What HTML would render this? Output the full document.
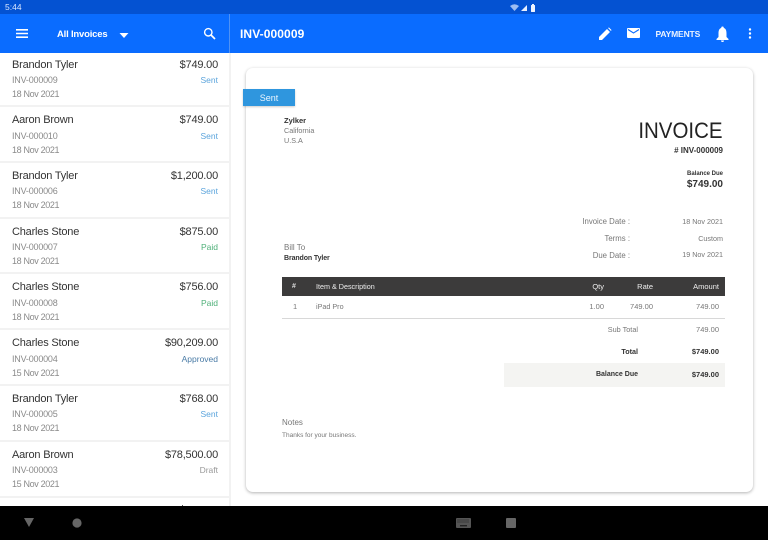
<!DOCTYPE html>
<html>
<head>
<meta charset="utf-8">
<style>
html,body{margin:0;padding:0;}
body{width:768px;height:540px;overflow:hidden;background:#fff;position:relative;font-family:"Liberation Sans",sans-serif;color:#333;}
.a{position:absolute;white-space:nowrap;line-height:1;}
.r{text-align:right;}
.sb{position:absolute;left:0;top:0;width:768px;height:14px;background:#0452d2;}
.tb{position:absolute;left:0;top:14px;width:768px;height:39px;background:#0a6cff;}
.ln{position:absolute;left:0;width:229px;height:2px;background:#f2f2f2;}
.nm{position:absolute;left:12px;font-size:11px;line-height:14px;color:#333;white-space:nowrap;letter-spacing:-.2px;}
.am{position:absolute;right:550px;font-size:11px;line-height:14px;color:#333;white-space:nowrap;letter-spacing:-.2px;}
.id{position:absolute;left:12px;font-size:9px;line-height:11px;color:#8a8a8a;white-space:nowrap;letter-spacing:-.2px;}
.st{position:absolute;right:550px;font-size:8.5px;line-height:11px;white-space:nowrap;}
.dt{position:absolute;left:12px;font-size:9px;line-height:11px;color:#8a8a8a;white-space:nowrap;letter-spacing:-.35px;}
.g{color:#777;}
.b{font-weight:bold;color:#333;}
</style>
</head>
<body>
<div class="sb"></div>
<div class="tb"></div>
<div class="a" style="left:5px;top:3px;font-size:8.5px;color:#dbe7ff;">5:44</div>
<svg class="a" style="left:509px;top:3px" width="30" height="9" viewBox="0 0 30 9">
<path d="M1 3 Q5.5 -0.5 10 3 L5.5 8Z" fill="#9dbdf2"/><path d="M12 8 L18 2 V8Z" fill="#e8efff"/><rect x="22" y="2" width="4" height="7" rx=".5" fill="#eef3ff"/><rect x="23" y="1" width="2" height="1" fill="#eef3ff"/>
</svg>
<div style="position:absolute;left:229px;top:14px;width:1px;height:39px;background:#4f92f5;"></div>
<svg class="a" style="left:16px;top:29px" width="12" height="9" viewBox="0 0 12 9"><path d="M0 0h12v1.6H0zM0 3.7h12v1.6H0zM0 7.4h12V9H0z" fill="#fff"/></svg>
<div class="a" style="left:57px;top:30px;font-size:9.5px;font-weight:bold;color:#fff;letter-spacing:-.2px;">All Invoices</div>
<svg class="a" style="left:119px;top:33px" width="10" height="5" viewBox="0 0 10 5"><path d="M0.5 0H9.5L5 5Z" fill="#fff"/></svg>
<svg class="a" style="left:203px;top:27px" width="13" height="13" viewBox="0 0 13 13"><circle cx="5.3" cy="5.3" r="3.7" fill="none" stroke="#fff" stroke-width="1.4"/><path d="M8 8L12 12" stroke="#fff" stroke-width="1.7"/></svg>
<div class="a" style="left:240px;top:28px;font-size:12px;font-weight:bold;color:#fff;letter-spacing:.1px;">INV-000009</div>
<svg class="a" style="left:598px;top:27px" width="14" height="14" viewBox="0 0 14 14"><path d="M1 13V10L9 2L12 5L4 13Z M10 1L11 .5L13.5 3L13 4Z" fill="#fff"/></svg>
<svg class="a" style="left:627px;top:28px" width="13" height="10" viewBox="0 0 13 10"><rect width="13" height="10" rx="1" fill="#fff"/><path d="M1 1.5L6.5 5L12 1.5" fill="none" stroke="#0a6cff" stroke-width="1.1"/></svg>
<div class="a" style="left:655.5px;top:30px;font-size:8.5px;font-weight:bold;color:#eaf2ff;letter-spacing:-.15px;">PAYMENTS</div>
<svg class="a" style="left:716px;top:26px" width="13" height="16" viewBox="0 0 13 16"><path d="M6.5 0.5a1.2 1.2 0 0 1 1.2 1.4C10 2.6 10.5 5 10.5 7.5V11L12.5 13V14H.5V13L2.5 11V7.5C2.5 5 3 2.6 5.3 1.9A1.2 1.2 0 0 1 6.5 .5ZM5 14.5H8A1.5 1.5 0 0 1 5 14.5Z" fill="#fff"/></svg>
<svg class="a" style="left:748px;top:28px" width="4" height="11" viewBox="0 0 4 11"><circle cx="2" cy="1.5" r="1.2" fill="#fff"/><circle cx="2" cy="5.5" r="1.2" fill="#fff"/><circle cx="2" cy="9.5" r="1.2" fill="#fff"/></svg>

<!-- list -->
<div style="position:absolute;left:229px;top:53px;width:2px;height:453px;background:#f2f2f2;"></div>

<div class="nm" style="top:58px">Brandon Tyler</div><div class="am" style="top:58px">$749.00</div>
<div class="id" style="top:75px">INV-000009</div><div class="st" style="top:75px;color:#5ba4dc">Sent</div>
<div class="dt" style="top:89px">18 Nov 2021</div><div class="ln" style="top:105px"></div>

<div class="nm" style="top:113px">Aaron Brown</div><div class="am" style="top:113px">$749.00</div>
<div class="id" style="top:131px">INV-000010</div><div class="st" style="top:131px;color:#5ba4dc">Sent</div>
<div class="dt" style="top:145px">18 Nov 2021</div><div class="ln" style="top:161px"></div>

<div class="nm" style="top:169px">Brandon Tyler</div><div class="am" style="top:169px">$1,200.00</div>
<div class="id" style="top:186px">INV-000006</div><div class="st" style="top:186px;color:#5ba4dc">Sent</div>
<div class="dt" style="top:200px">18 Nov 2021</div><div class="ln" style="top:217px"></div>

<div class="nm" style="top:225px">Charles Stone</div><div class="am" style="top:225px">$875.00</div>
<div class="id" style="top:242px">INV-000007</div><div class="st" style="top:242px;color:#4fb079">Paid</div>
<div class="dt" style="top:256px">18 Nov 2021</div><div class="ln" style="top:272px"></div>

<div class="nm" style="top:280px">Charles Stone</div><div class="am" style="top:280px">$756.00</div>
<div class="id" style="top:298px">INV-000008</div><div class="st" style="top:298px;color:#4fb079">Paid</div>
<div class="dt" style="top:312px">18 Nov 2021</div><div class="ln" style="top:328px"></div>

<div class="nm" style="top:336px">Charles Stone</div><div class="am" style="top:336px">$90,209.00</div>
<div class="id" style="top:354px">INV-000004</div><div class="st" style="top:354px;color:#4a7ba6">Approved</div>
<div class="dt" style="top:368px">15 Nov 2021</div><div class="ln" style="top:384px"></div>

<div class="nm" style="top:392px">Brandon Tyler</div><div class="am" style="top:392px">$768.00</div>
<div class="id" style="top:409px">INV-000005</div><div class="st" style="top:409px;color:#5ba4dc">Sent</div>
<div class="dt" style="top:423px">18 Nov 2021</div><div class="ln" style="top:440px"></div>

<div class="nm" style="top:448px">Aaron Brown</div><div class="am" style="top:448px">$78,500.00</div>
<div class="id" style="top:465px">INV-000003</div><div class="st" style="top:465px;color:#999">Draft</div>
<div class="dt" style="top:479px">15 Nov 2021</div><div class="ln" style="top:496px"></div>

<!-- invoice card -->
<div style="position:absolute;left:246px;top:68px;width:507px;height:424px;background:#fff;border-radius:7px;box-shadow:0 1px 3px rgba(0,0,0,.3);"></div>
<div class="a" style="left:243px;top:89px;width:52px;height:17px;background:#2f96de;color:#eaf5ff;font-size:9px;line-height:18px;text-align:center;box-shadow:0 1px 2px rgba(0,0,0,.2);">Sent</div>

<div class="a b" style="left:284px;top:117px;font-size:7.5px;">Zylker</div>
<div class="a g" style="left:284px;top:127px;font-size:7.2px;">California</div>
<div class="a g" style="left:284px;top:137px;font-size:7.2px;">U.S.A</div>
<div class="a g" style="left:284px;top:244px;font-size:8px;">Bill To</div>
<div class="a b" style="left:284px;top:254.5px;font-size:7px;letter-spacing:-.1px;">Brandon Tyler</div>

<div class="a r" style="right:45px;top:120px;font-size:22.5px;color:#222;transform:scaleX(.91);transform-origin:right center;">INVOICE</div>
<div class="a r b" style="right:45px;top:147px;font-size:8px;"># INV-000009</div>
<div class="a r b" style="right:45px;top:170.5px;font-size:6px;">Balance Due</div>
<div class="a r b" style="right:45px;top:180px;font-size:10px;">$749.00</div>

<div class="a r g" style="right:138px;top:218px;font-size:7.8px;">Invoice Date :</div>
<div class="a r g" style="right:45px;top:217.5px;font-size:7.2px;">18 Nov 2021</div>
<div class="a r g" style="right:138px;top:235px;font-size:7.8px;">Terms :</div>
<div class="a r g" style="right:45px;top:234.5px;font-size:7.2px;">Custom</div>
<div class="a r g" style="right:138px;top:251.5px;font-size:7.8px;">Due Date :</div>
<div class="a r g" style="right:45px;top:251px;font-size:7.2px;">19 Nov 2021</div>

<div style="position:absolute;left:282px;top:277px;width:443px;height:19px;background:#3c3b3b;"></div>
<div class="a" style="left:292px;top:283px;font-size:7px;font-weight:bold;color:#ddd;">#</div>
<div class="a" style="left:316px;top:283px;font-size:7.2px;color:#eee;">Item &amp; Description</div>
<div class="a r" style="right:164px;top:283px;font-size:7.5px;color:#eee;">Qty</div>
<div class="a r" style="right:115px;top:283px;font-size:7.5px;color:#eee;">Rate</div>
<div class="a r" style="right:49px;top:283px;font-size:7.5px;color:#eee;">Amount</div>

<div class="a g" style="left:293px;top:303px;font-size:7.5px;">1</div>
<div class="a g" style="left:316px;top:303px;font-size:7.2px;">iPad Pro</div>
<div class="a r g" style="right:164px;top:303px;font-size:7.5px;">1.00</div>
<div class="a r g" style="right:115px;top:303px;font-size:7.5px;">749.00</div>
<div class="a r g" style="right:49px;top:303px;font-size:7.5px;">749.00</div>
<div style="position:absolute;left:282px;top:318px;width:443px;height:1px;background:#d8d8d8;"></div>

<div class="a r g" style="right:130px;top:326px;font-size:7.3px;">Sub Total</div>
<div class="a r g" style="right:49px;top:326px;font-size:7.5px;">749.00</div>
<div class="a r b" style="right:130px;top:348px;font-size:7.2px;">Total</div>
<div class="a r b" style="right:49px;top:348px;font-size:7.5px;">$749.00</div>
<div style="position:absolute;left:504px;top:363px;width:221px;height:24px;background:#f4f4f2;"></div>
<div class="a r b" style="right:130px;top:371px;font-size:7px;">Balance Due</div>
<div class="a r b" style="right:49px;top:371px;font-size:7.5px;">$749.00</div>

<div class="a g" style="left:282px;top:418.5px;font-size:8px;">Notes</div>
<div class="a g" style="left:282px;top:432.5px;font-size:6.5px;">Thanks for your business.</div>

<!-- nav bar -->
<div style="position:absolute;left:0;top:506px;width:768px;height:34px;background:#000;"></div>
<div style="position:absolute;left:182px;top:505px;width:1px;height:1px;background:#555;"></div>
<svg class="a" style="left:24px;top:518px" width="10" height="9" viewBox="0 0 10 9"><path d="M0 0H10L5 9Z" fill="#666"/></svg>
<svg class="a" style="left:72px;top:518px" width="10" height="10" viewBox="0 0 10 10"><circle cx="5" cy="5" r="4.6" fill="#666"/></svg>
<svg class="a" style="left:456px;top:518px" width="15" height="10" viewBox="0 0 15 10"><rect width="15" height="10" rx="1" fill="#555"/><path d="M1.5 2h12M1.5 4h12" stroke="#222" stroke-width="1" stroke-dasharray="1 1"/><rect x="4" y="7" width="7" height="1.4" fill="#222"/></svg>
<div style="position:absolute;left:506px;top:518px;width:10px;height:10px;border-radius:1px;background:#666;"></div>
</body>
</html>
